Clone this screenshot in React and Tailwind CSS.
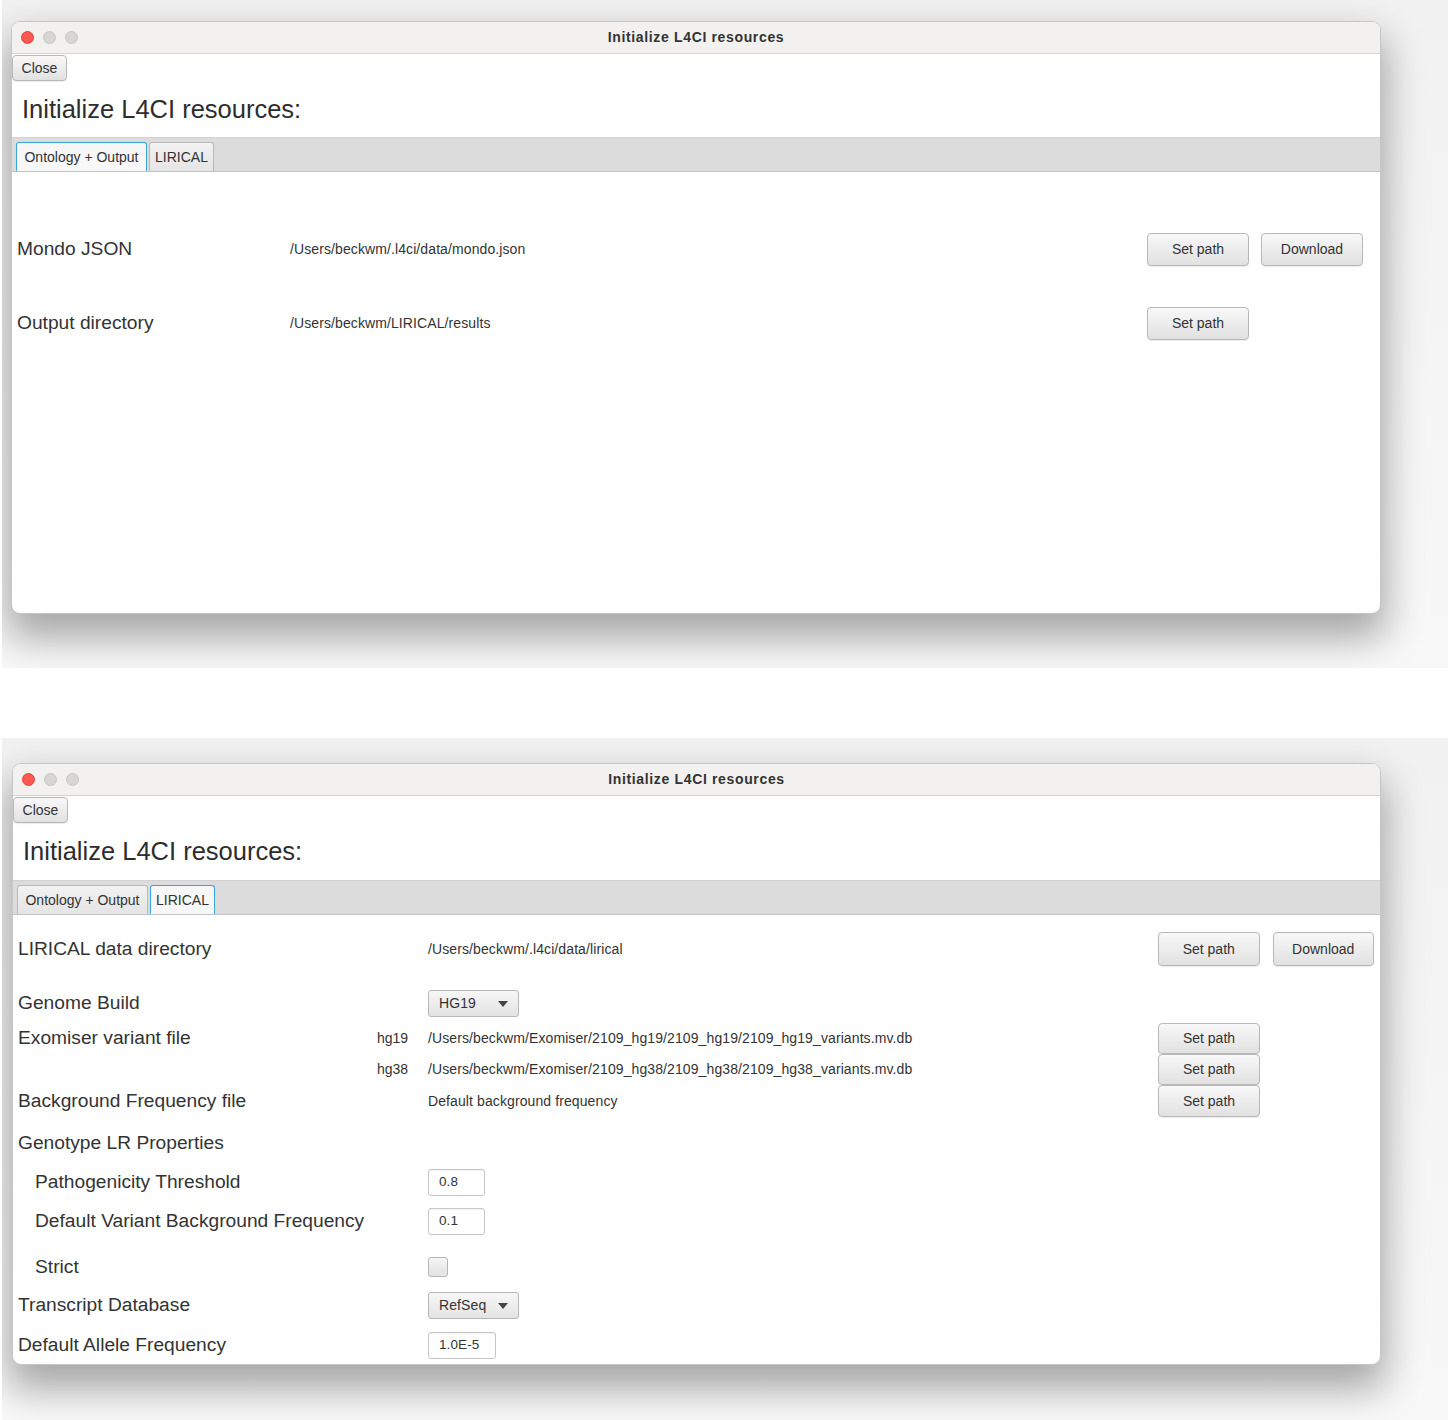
import React from "react";

const FONT = "font-['Liberation_Sans',Arial,Helvetica,sans-serif]";

function Btn({ children, className = "" }) {
  return (
    <div
      className={`flex items-center justify-center rounded-[4px] border border-[#b8b8b8] bg-gradient-to-b from-[#f8f8f8] to-[#e1e1e1] text-[14px] text-[#333] shadow-[0_1px_1px_rgba(0,0,0,0.08)] ${className}`}
    >
      {children}
    </div>
  );
}

function TitleBar() {
  return (
    <div className="relative flex h-[32px] shrink-0 items-center border-b border-[#d4d4d4] bg-[#f2f1f0]">
      <div className="flex items-center gap-[9px] pl-[9px]">
        <span className="h-[13px] w-[13px] rounded-full border border-[#e0443e] bg-[#fd5953]" />
        <span className="h-[13px] w-[13px] rounded-full border border-[#c6c6c6] bg-[#d6d6d6]" />
        <span className="h-[13px] w-[13px] rounded-full border border-[#c6c6c6] bg-[#d6d6d6]" />
      </div>
      <div className="absolute inset-0 flex items-center justify-center text-[14px] font-bold tracking-[0.65px] text-[#333]">
        Initialize L4CI resources
      </div>
    </div>
  );
}

function Header({ active, headH }) {
  return (
    <>
      <div className="flex h-[27px] shrink-0 items-start pt-[1px]">
        <Btn className="h-[26px] w-[55px] rounded-[3px]">Close</Btn>
      </div>
      <div className={`flex shrink-0 items-center pl-[10px] text-[25.5px] text-[#2d2d2d] ${headH}`}>
        Initialize L4CI resources:
      </div>
      <div className="flex h-[34px] shrink-0 items-end gap-[2px] border-t border-[#d2d2d2] bg-[#dcdcdc] pl-[4px]">
        <div
          className={`flex h-[29px] w-[131px] items-center justify-center rounded-t-[3px] border border-b-0 text-[14px] text-[#333] ${
            active === 0
              ? "border-[#3ba6dc] bg-[#f7f7f7]"
              : "border-[#b9b9b9] bg-gradient-to-b from-[#f2f2f2] to-[#e4e4e4]"
          }`}
        >
          Ontology + Output
        </div>
        <div
          className={`flex h-[29px] w-[65px] items-center justify-center rounded-t-[3px] border border-b-0 text-[14px] text-[#333] ${
            active === 1
              ? "border-[#3ba6dc] bg-[#f7f7f7]"
              : "border-[#b9b9b9] bg-gradient-to-b from-[#f2f2f2] to-[#e4e4e4]"
          }`}
        >
          LIRICAL
        </div>
      </div>
    </>
  );
}

function Combo({ value }) {
  return (
    <div className="flex h-[27px] w-[91px] items-center justify-between rounded-[3px] border border-[#b6b6b6] bg-gradient-to-b from-[#f7f7f7] to-[#e3e3e3] pl-[10px] pr-[10px] text-[14px] text-[#333]">
      <span>{value}</span>
      <svg width="10" height="6" viewBox="0 0 10 6">
        <path d="M0 0 L10 0 L5 6 Z" fill="#444" />
      </svg>
    </div>
  );
}

function Field({ value, w }) {
  return (
    <div
      className={`flex h-[27px] items-center rounded-[3px] border border-[#c6c6c6] bg-white pl-[10px] text-[13.5px] text-[#333] shadow-[inset_0_1px_1px_rgba(0,0,0,0.05)] ${w}`}
    >
      {value}
    </div>
  );
}

function Row2({ mt, h, label, indent, hg, middle, right }) {
  return (
    <div className={`flex shrink-0 items-center ${mt} ${h}`}>
      <div
        className={`w-[359px] shrink-0 text-[19.2px] text-[#333] ${indent ? "pl-[17px]" : ""}`}
      >
        {label}
      </div>
      <div className="w-[51px] shrink-0 text-[14px] text-[#333]">{hg}</div>
      <div className="flex flex-1 items-center text-[14px] tracking-[0.1px] text-[#333]">{middle}</div>
      <div className="flex h-full w-[216px] shrink-0 items-center gap-[13px]">{right}</div>
    </div>
  );
}

export default function App() {
  return (
    <div className={`${FONT} min-h-[1420px] w-[1448px] bg-white`}>
      {/* First screenshot */}
      <div className="ml-[2px] h-[668px] overflow-hidden bg-gradient-to-b from-[#f1f1f1] to-[#f8f8f8] pl-[9px] pt-[21px]">
        <div className="flex h-[593px] w-[1370px] flex-col overflow-hidden rounded-[9px] border border-[#c6c6c6] bg-white shadow-[0_20px_38px_4px_rgba(0,0,0,0.33)]">
          <TitleBar />
          <Header active={0} headH="h-[56px]" />
          <div className="flex flex-1 flex-col border-t border-[#c4c4c4] pl-[5px] pr-[17px]">
            <div className="mt-[61px] flex h-[33px] items-center">
              <div className="w-[273px] shrink-0 text-[19.2px] text-[#333]">Mondo JSON</div>
              <div className="flex-1 text-[14px] tracking-[0.1px] text-[#333]">/Users/beckwm/.l4ci/data/mondo.json</div>
              <div className="flex gap-[12px]">
                <Btn className="h-[33px] w-[102px]">Set path</Btn>
                <Btn className="h-[33px] w-[102px]">Download</Btn>
              </div>
            </div>
            <div className="mt-[41px] flex h-[33px] items-center">
              <div className="w-[273px] shrink-0 text-[19.2px] text-[#333]">Output directory</div>
              <div className="flex-1 text-[14px] tracking-[0.1px] text-[#333]">/Users/beckwm/LIRICAL/results</div>
              <div className="flex gap-[12px]">
                <Btn className="h-[33px] w-[102px]">Set path</Btn>
                <div className="h-[33px] w-[102px]" />
              </div>
            </div>
          </div>
        </div>
      </div>

      {/* Second screenshot */}
      <div className="ml-[2px] mt-[70px] h-[682px] overflow-hidden bg-gradient-to-b from-[#f1f1f1] to-[#f8f8f8] pl-[10px] pt-[25px]">
        <div className="flex h-[602px] w-[1369px] flex-col overflow-hidden rounded-[9px] border border-[#c6c6c6] bg-white shadow-[0_20px_38px_4px_rgba(0,0,0,0.33)]">
          <TitleBar />
          <Header active={1} headH="h-[57px]" />
          <div className="flex flex-1 flex-col border-t border-[#c4c4c4] pl-[5px] pr-[6px]">
            <Row2
              mt="mt-[17px]"
              h="h-[34px]"
              label="LIRICAL data directory"
              middle="/Users/beckwm/.l4ci/data/lirical"
              right={
                <>
                  <Btn className="h-[34px] w-[102px]">Set path</Btn>
                  <Btn className="h-[34px] w-[102px]">Download</Btn>
                </>
              }
            />
            <Row2 mt="mt-[24px]" h="h-[27px]" label="Genome Build" middle={<Combo value="HG19" />} />
            <Row2
              mt="mt-[6px]"
              h="h-[31px]"
              label="Exomiser variant file"
              hg="hg19"
              middle="/Users/beckwm/Exomiser/2109_hg19/2109_hg19/2109_hg19_variants.mv.db"
              right={<Btn className="h-[31px] w-[102px] rounded-[3px]">Set path</Btn>}
            />
            <Row2
              h="h-[31px]"
              hg="hg38"
              middle="/Users/beckwm/Exomiser/2109_hg38/2109_hg38/2109_hg38_variants.mv.db"
              right={<Btn className="h-[31px] w-[102px] rounded-[3px]">Set path</Btn>}
            />
            <Row2
              h="h-[32px]"
              label="Background Frequency file"
              middle="Default background frequency"
              right={<Btn className="h-[32px] w-[102px] rounded-[3px]">Set path</Btn>}
            />
            <Row2 mt="mt-[11px]" h="h-[30px]" label="Genotype LR Properties" />
            <Row2
              mt="mt-[11px]"
              h="h-[27px]"
              indent
              label="Pathogenicity Threshold"
              middle={<Field value="0.8" w="w-[57px]" />}
            />
            <Row2
              mt="mt-[12px]"
              h="h-[27px]"
              indent
              label="Default Variant Background Frequency"
              middle={<Field value="0.1" w="w-[57px]" />}
            />
            <Row2
              mt="mt-[22px]"
              h="h-[20px]"
              indent
              label="Strict"
              middle={
                <div className="h-[20px] w-[20px] rounded-[3px] border border-[#b6b6b6] bg-gradient-to-b from-[#f5f5f5] to-[#e2e2e2]" />
              }
            />
            <Row2 mt="mt-[15px]" h="h-[27px]" label="Transcript Database" middle={<Combo value="RefSeq" />} />
            <Row2
              mt="mt-[13px]"
              h="h-[27px]"
              label="Default Allele Frequency"
              middle={<Field value="1.0E-5" w="w-[68px]" />}
            />
          </div>
        </div>
      </div>
    </div>
  );
}
